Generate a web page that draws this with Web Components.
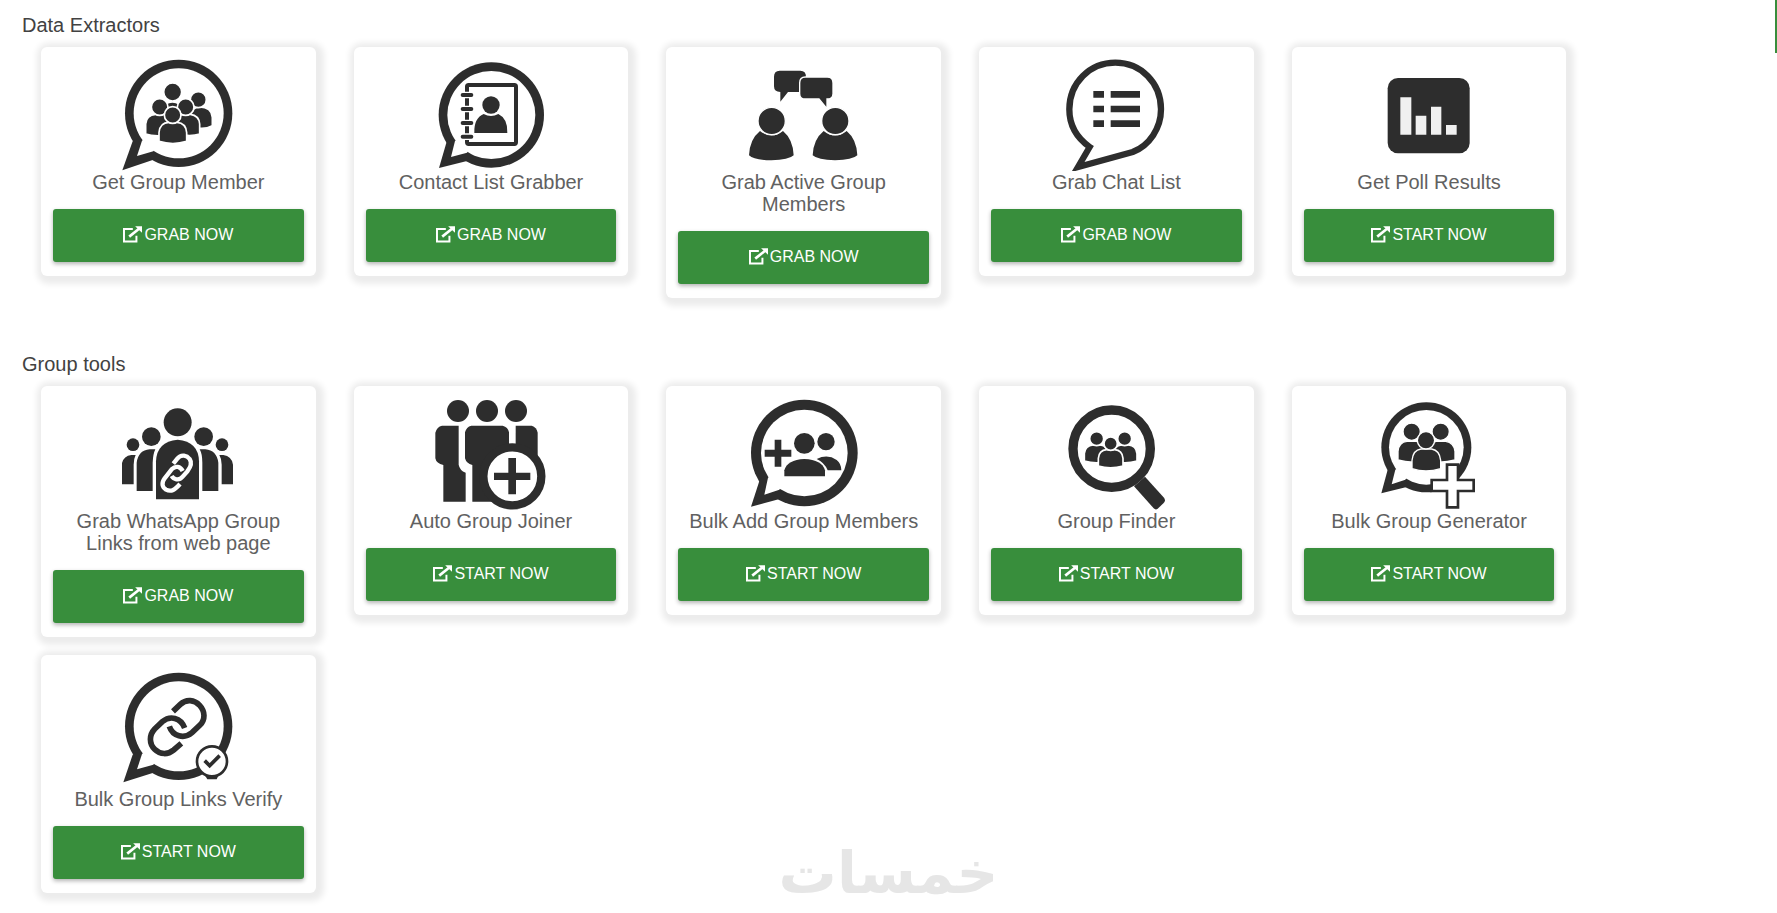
<!DOCTYPE html>
<html lang="en">
<head>
<meta charset="utf-8">
<title>Group tools</title>
<style>
  body { margin: 0; background: #fff; font-family: "Liberation Sans", Arial, sans-serif; color: #424242; }
</style>
</head>
<body>
<tool-board>
  <tool-section heading="Data Extractors">
    <tool-card icon="members" action="Grab now">Get Group Member</tool-card>
    <tool-card icon="contacts" action="Grab now">Contact List Grabber</tool-card>
    <tool-card icon="active" action="Grab now">Grab Active Group Members</tool-card>
    <tool-card icon="chats" action="Grab now">Grab Chat List</tool-card>
    <tool-card icon="poll" action="Start now">Get Poll Results</tool-card>
  </tool-section>
  <tool-section heading="Group tools">
    <tool-card icon="weblinks" action="Grab now">Grab WhatsApp Group Links from web page</tool-card>
    <tool-card icon="joiner" action="Start now">Auto Group Joiner</tool-card>
    <tool-card icon="add" action="Start now">Bulk Add Group Members</tool-card>
    <tool-card icon="finder" action="Start now">Group Finder</tool-card>
    <tool-card icon="generator" action="Start now">Bulk Group Generator</tool-card>
    <tool-card icon="verify" action="Start now">Bulk Group Links Verify</tool-card>
  </tool-section>
</tool-board>
<brand-mark>خمسات</brand-mark>

<script>
// Speech bubble: dark disc and tail, with a white disc and tail cut into them.
const bubble = (cx, cy, outer, inner, tail, hollow) => `
  <circle cx="${cx}" cy="${cy}" r="${outer}"/><path d="M${cx} ${cy}L${tail}Z"/>
  <g fill="#fff"><circle cx="${cx}" cy="${cy}" r="${inner}"/><path d="M${cx} ${cy}L${hollow}Z"/></g>`;

const ICONS = {
  members: ['367 177 336 336', `
    ${bubble(537, 340, 161, 135, '399 424L368 511L459 480', '427 422L412 468L461 454')}
    <g stroke="#fff" stroke-width="5">
      <path d="M571 382V350Q574 322 600 321Q636 322 638 352V377Q620 387 600 385Z"/><circle cx="596" cy="299" r="24"/>
      <path d="M497 340V313Q518 298 540 313V340Z"/><circle cx="519" cy="276" r="27"/>
      <path d="M438 402V372Q440 344 468 343H492Q510 345 514 372V404Q465 412 438 402Z"/><circle cx="480" cy="321" r="25"/>
      <path d="M525 400V368Q530 344 552 343H572Q598 346 600 372V402Q570 412 525 400Z"/><circle cx="558" cy="321" r="25"/>
      <path d="M478 424V398Q480 368 508 367H532Q559 369 561 398V424Q520 437 478 424Z"/><circle cx="519" cy="345" r="25"/>
    </g>`],
  contacts: ['284 87 336 336', `
    ${bubble(453, 255, 158, 132, '319 335L296 414L380 393', '344 333L332 381L380 368')}
    <rect x="380" y="165" width="147" height="177" rx="5" fill="none" stroke="#2d2d2d" stroke-width="12"/>
    <path stroke="#fff" stroke-width="20" d="M368 195h24M368 237h24M368 279h24M368 320h24"/>
    <path stroke="#2d2d2d" stroke-width="12" stroke-linecap="round" d="M367 195h26M367 237h26M367 279h26M367 320h26"/>
    <path d="M402 309Q400 265 430 252Q452 264 474 252Q503 266 501 309Z"/><circle cx="452" cy="225" r="26"/>`],
  active: ['292 87 336 336', `
    <path d="M387 122H449Q466 122 466 140V169Q466 186 449 186H412L389 215V186Q370 186 370 169V140Q370 122 387 122Z"/>
    <path stroke="#fff" stroke-width="4" d="M464 141H530Q547 141 547 159V191Q547 207 529 207V236L505 207H464Q447 207 447 191V159Q447 141 464 141Z"/>
    <g id="p"><path d="M295 376Q297 328 328 303Q362 330 397 303Q427 328 429 376Q415 390 362 391Q310 390 295 376Z"/><circle cx="363" cy="273" r="41" stroke="#fff" stroke-width="4"/></g>
    <use href="#p" x="191"/>`],
  chats: ['300 87 336 336', `
    <path fill="none" stroke="#2d2d2d" stroke-width="19" d="M354 411L389 351C352 325 328 289 328 238C328 158 390 98 466 98C542 98 603 158 603 238C603 294 569 346 518 366Z"/>
    <path d="M400 183h32v20h-32zM452 183h88v20h-88zM400 227h32v20h-32zM452 227h88v20h-88zM400 271h32v20h-32zM452 271h88v20h-88z"/>`],
  poll: ['308 87 336 336', `
    <rect x="352" y="144" width="246" height="226" rx="31"/>
    <path fill="#f0f0f0" d="M390 202h33v112h-33zM436 257h32v57h-32zM482 230h31v84h-31zM527 285h32v29h-32z"/>`],
  weblinks: ['367 143 336 336', `
    <circle cx="534" cy="216" r="42"/><circle cx="455" cy="259" r="28"/><circle cx="612" cy="259" r="28"/><circle cx="400" cy="283" r="19"/><circle cx="667" cy="283" r="19"/>
    <path d="M469 447V333Q471 274 534 268Q597 274 598 333V447Z"/>
    <path d="M411 422V337Q416 300 450 297H467Q460 311 459 337V422ZM656 422V337Q651 300 617 297H600Q608 311 608 337V422Z"/>
    <path d="M366 402V343Q370 317 395 314H408Q402 325 402 343V402ZM700 402V343Q696 317 671 314H659Q666 325 666 343V402Z"/>
    <g fill="none" stroke="#fff" stroke-width="13"><path d="M521 340L533 325C545 310 562 316 570 326C578 338 573 350 563 363L549 379C537 393 522 387 516 377"/><path d="M549 362C542 347 527 346 517 356L495 384C484 399 488 411 499 418C515 426 526 418 541 401"/></g>`],
  joiner: ['284 83 336 336', `
    <circle cx="353" cy="122" r="33"/><circle cx="440" cy="122" r="33"/><circle cx="527" cy="122" r="33"/>
    <path d="M305 166H355V283Q358 300 376 307V394H309V284Q288 280 285 264V187Q290 169 305 166Z"/>
    <path d="M393 166H487Q503 170 506 186V240L470 394H396V284Q378 280 374 264V186Q378 169 393 166Z"/>
    <path d="M526 166H574Q589 170 592 187V265L526 240Z"/>
    <circle cx="516" cy="318" r="87" fill="#fff" stroke="#2d2d2d" stroke-width="25"/>
    <path d="M504 263h23v44h43v22h-43v43h-23v-43h-43v-22h43z"/>`],
  add: ['292 83 336 336', `
    ${bubble(461, 248, 160, 130, '328 326L301 409L384 387', '352 322L341 373L386 358')}
    <path d="M372 208h20v30h30v21h-30v30h-20v-30h-30v-21h30z"/>
    <circle cx="461" cy="219" r="31"/><circle cx="526" cy="214" r="26"/>
    <path d="M401 318V300Q410 268 461 266Q514 268 523 300V318Z"/>
    <path d="M498 266Q531 250 558 269Q572 280 572 300H531Q521 276 498 266Z"/>`],
  finder: ['300 83 336 336', `
    <circle cx="455" cy="235" r="116" fill="none" stroke="#2d2d2d" stroke-width="28"/>
    <path d="M522 348L555 319L612 382Q618 390 611 398L593 415Q587 420 581 414Z"/>
    <g stroke="#fff" stroke-width="5">
      <path d="M373 272V249Q376 226 399 224H420Q444 226 446 250V272Q410 283 373 272ZM459 272V249Q462 226 485 224H505Q529 226 531 250V272Q495 283 459 272Z"/>
      <circle cx="410" cy="205" r="21"/><circle cx="494" cy="205" r="21"/>
      <path d="M415 287V264Q417 240 440 238H464Q487 240 489 264V287Q451 298 415 287Z"/><circle cx="452" cy="220" r="20"/>
    </g>`],
  generator: ['308 83 336 336', `
    ${bubble(468, 231, 135, 112, '352 298L333 369L406 351', '375 298L364 342L405 328')}
    <g stroke="#fff" stroke-width="4">
      <path d="M383 269V243Q386 215 410 213H438Q460 218 462 243V272Q420 280 383 269ZM474 272V243Q477 216 498 213H526Q551 217 554 243V269Q515 280 474 272Z"/>
      <circle cx="424" cy="184" r="26"/><circle cx="511" cy="184" r="26"/>
      <path d="M425 295V270Q428 239 452 236H484Q508 240 511 270V295Q466 309 425 295Z"/><circle cx="467" cy="210" r="26"/>
    </g>
    <path fill="#fff" stroke="#2d2d2d" stroke-width="8" d="M530 283h33v46h47v33h-47v49h-33v-49h-46v-33h46z"/>`],
  verify: ['367 79 336 363', `
    ${bubble(537, 257, 161, 135, '399 342L371 425L459 397', '427 340L412 386L461 372')}
    <g fill="none" stroke="#2d2d2d" stroke-width="17">
      <path d="M520 212L542 191C560 174 584 177 600 194C617 212 617 237 601 253L577 276C553 296 519 287 509 257"/>
      <path d="M555 262C543 230 511 224 488 243L465 265C448 283 448 309 465 326C482 343 505 342 522 328L545 308"/>
    </g>
    <path d="M615 403h42l-6 13h-28z"/>
    <circle cx="637" cy="362" r="45" fill="#fff" stroke="#2d2d2d" stroke-width="8"/>
    <path fill="none" stroke="#2d2d2d" stroke-width="11" d="M615 360L630 375L660 345"/>`]
};

class ToolIcon extends HTMLElement {
  connectedCallback() {
    const [box, art] = ICONS[this.getAttribute('name')];
    this.attachShadow({ mode: 'open' }).innerHTML = `
      <style>
        :host { display: block; width: 112px; }
        svg { display: block; width: 100%; height: auto; fill: #2d2d2d; }
      </style>
      <svg viewBox="${box}" aria-hidden="true">${art}</svg>`;
  }
}

class ActionButton extends HTMLElement {
  connectedCallback() {
    this.attachShadow({ mode: 'open' }).innerHTML = `
      <style>
        :host { display: block; }
        button { display: flex; align-items: center; justify-content: center; gap: 2px; width: 100%; height: 53px;
          padding: 0 0 2px; border: 0; border-radius: 3px; background: #388e3c; color: #fff;
          font-family: inherit; font-size: 16px; line-height: 20px; text-transform: uppercase; cursor: pointer;
          box-shadow: 0 2px 4px rgba(0,0,0,.3); }
        svg { width: 19px; height: 17px; }
      </style>
      <button type="button">
        <svg viewBox="370 680 58 51" aria-hidden="true">
          <path fill="none" stroke="#fff" stroke-width="6" d="M400 689H373V727H411V709"/>
          <path fill="none" stroke="#fff" stroke-width="8" d="M389 712L419 688"/>
          <path fill="#fff" d="M407 680H428V700Z"/>
        </svg>
        <span><slot></slot></span>
      </button>`;
  }
}

class ToolCard extends HTMLElement {
  connectedCallback() {
    this.attachShadow({ mode: 'open' }).innerHTML = `
      <style>
        :host { display: block; }
        article { padding: 12px 12px 14px; border-radius: 6px; background: #fff; box-shadow: 2px 2px 6px 6px #ececec; }
        tool-icon { margin: 0 auto; }
        h3 { margin: 0 0 16px; color: #616161; font-size: 20px; line-height: 22px; font-weight: 400; text-align: center; }
      </style>
      <article>
        <tool-icon name="${this.getAttribute('icon')}"></tool-icon>
        <h3><slot></slot></h3>
        <action-button>${this.getAttribute('action')}</action-button>
      </article>`;
  }
}

class ToolSection extends HTMLElement {
  connectedCallback() {
    this.attachShadow({ mode: 'open' }).innerHTML = `
      <style>
        :host { display: block; }
        h2 { margin: 0 0 10px; font-size: 20px; line-height: 24px; font-weight: 400; }
        .cards { display: grid; grid-template-columns: repeat(5, minmax(0, 1fr)); gap: 18px 38px; align-items: start;
          margin: 0 12% 0 19px; }
      </style>
      <section><h2>${this.getAttribute('heading')}</h2><div class="cards"><slot></slot></div></section>`;
  }
}

class ToolBoard extends HTMLElement {
  connectedCallback() {
    this.attachShadow({ mode: 'open' }).innerHTML = `
      <style>
        :host { display: block; }
        main { display: flex; flex-direction: column; gap: 54px; padding: 13px 0 20px 22px; }
        .edge { position: absolute; top: 0; right: 0; width: 2px; height: 53px; background: #388e3c; }
      </style>
      <main><slot></slot></main>
      <div class="edge"></div>`;
  }
}

class BrandMark extends HTMLElement {
  connectedCallback() {
    this.attachShadow({ mode: 'open' }).innerHTML = `
      <style>
        :host { position: absolute; top: 841px; left: 0; right: 0; text-align: center; pointer-events: none;
          color: #e6e6e6; font: bold 58px/64px "DejaVu Sans", sans-serif; }
      </style>
      <span lang="ar" dir="rtl"><slot></slot></span>`;
  }
}

customElements.define('tool-icon', ToolIcon);
customElements.define('action-button', ActionButton);
customElements.define('tool-card', ToolCard);
customElements.define('tool-section', ToolSection);
customElements.define('tool-board', ToolBoard);
customElements.define('brand-mark', BrandMark);
</script>
</body>
</html>
